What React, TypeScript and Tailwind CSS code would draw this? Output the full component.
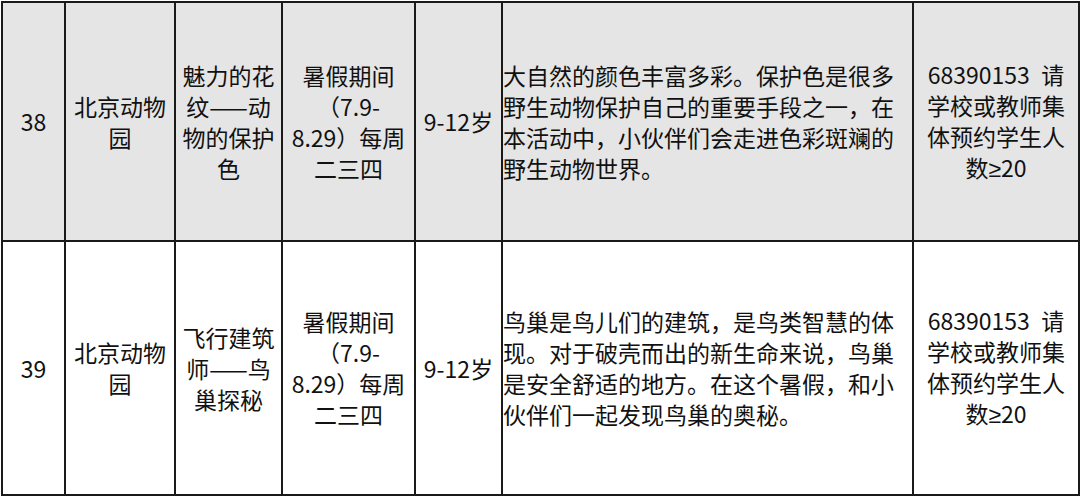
import React from 'react';

const font = { fontFamily: '"Noto Sans CJK SC", "Noto Sans", sans-serif' };

type Row = {
  no: string;
  place: string[];
  title: string[];
  time: string[];
  age: string;
  desc: string[];
  shaded: boolean;
};

const rows: Row[] = [
  {
    no: '38',
    place: ['北京动物', '园'],
    title: ['魅力的花', '纹——动', '物的保护', '色'],
    time: ['暑假期间', '（7.9-', '8.29）每周', '二三四'],
    age: '9-12岁',
    desc: [
      '大自然的颜色丰富多彩。保护色是很多',
      '野生动物保护自己的重要手段之一，在',
      '本活动中，小伙伴们会走进色彩斑斓的',
      '野生动物世界。',
    ],
    shaded: true,
  },
  {
    no: '39',
    place: ['北京动物', '园'],
    title: ['飞行建筑', '师——鸟', '巢探秘'],
    time: ['暑假期间', '（7.9-', '8.29）每周', '二三四'],
    age: '9-12岁',
    desc: [
      '鸟巢是鸟儿们的建筑，是鸟类智慧的体',
      '现。对于破壳而出的新生命来说，鸟巢',
      '是安全舒适的地方。在这个暑假，和小',
      '伙伴们一起发现鸟巢的奥秘。',
    ],
    shaded: false,
  },
];

function Lines({ items }: { items: string[] }) {
  return (
    <>
      {items.map((t, i) => (
        <div key={i} className="whitespace-nowrap">
          {t}
        </div>
      ))}
    </>
  );
}

function Contact() {
  return (
    <>
      <div className="whitespace-pre">68390153{'\u2002'}请</div>
      <div className="whitespace-nowrap">学校或教师集</div>
      <div className="whitespace-nowrap">体预约学生人</div>
      <div className="whitespace-nowrap">
        数<span className="font-['Liberation_Sans',sans-serif]">≥</span>20
      </div>
    </>
  );
}

export default function App() {
  const cell = 'border-2 border-[#1a1a1a] align-middle p-0';

  return (
    <div className="w-[1080px] h-[500px] bg-white pt-px pl-px" style={font}>
      <table className="table-fixed border-collapse w-[1077px] text-[23px] leading-[31px] text-[#111]">
        <colgroup>
          <col className="w-[63px]" />
          <col className="w-[110px]" />
          <col className="w-[107px]" />
          <col className="w-[133px]" />
          <col className="w-[87px]" />
          <col className="w-[411px]" />
          <col className="w-[166px]" />
        </colgroup>
        <tbody>
          {rows.map((r, idx) => (
            <tr
              key={r.no}
              className={
                (r.shaded ? 'bg-[#e5e5e5] ' : 'bg-white ') +
                (idx === 0 ? 'h-[239px]' : 'h-[254px]')
              }
            >
              <td className={cell + ' text-center'}>{r.no}</td>
              <td className={cell + ' text-center'}>
                <Lines items={r.place} />
              </td>
              <td className={cell + ' text-center'}>
                <Lines items={r.title} />
              </td>
              <td className={cell + ' text-center'}>
                <Lines items={r.time} />
              </td>
              <td className={cell + ' text-center'}>{r.age}</td>
              <td className={cell + ' text-left'}>
                <Lines items={r.desc} />
              </td>
              <td className={cell + ' text-center'}>
                <Contact />
              </td>
            </tr>
          ))}
        </tbody>
      </table>
    </div>
  );
}
